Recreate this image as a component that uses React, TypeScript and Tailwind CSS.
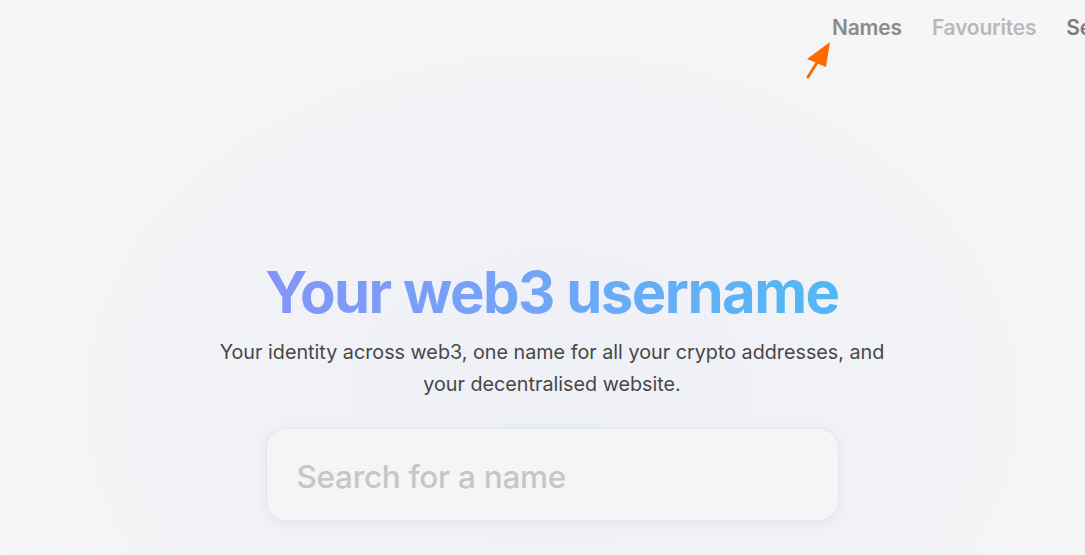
import React from "react";

const NavLinks = () => (
  <nav className="flex items-center gap-[30px] whitespace-nowrap pl-[832px] pt-[12px] text-[21px] font-semibold tracking-[-0.2px]">
    <a className="text-[#8b8b8b]">Names</a>
    <a className="text-[#b9b9b9]">Favourites</a>
    <a className="text-[#7c7c7c]">Settings</a>
  </nav>
);

const Arrow = () => (
  <svg className="absolute left-[800px] top-[36px]" width="40" height="48" viewBox="800 36 40 48">
    <line x1="808" y1="77" x2="818" y2="61" stroke="#ff6a00" strokeWidth="3" strokeLinecap="round" />
    <polygon points="830,42 807,59 826,67" fill="#ff6a00" />
  </svg>
);

export default function App() {
  return (
    <div
      className="relative h-[555px] w-full overflow-hidden bg-[radial-gradient(ellipse_620px_460px_at_552px_400px,#eef0f6_0%,#f2f3f6_60%,#f6f6f7_100%)]"
      style={{ fontFamily: "Inter, 'Noto Sans', sans-serif" }}
    >
      <div className="w-[1104px]">
        <NavLinks />
        <main className="flex flex-col items-center pt-[215px]">
          <h1 className="bg-gradient-to-r from-[#8494f8] to-[#50b8f5] bg-clip-text text-[58px] leading-[66px] font-bold tracking-[-1.5px] text-transparent">
            Your web3 username
          </h1>
          <p className="mt-[11px] w-[720px] text-center text-[19.75px] leading-[32px] text-[#474747]">
            Your identity across web3, one name for all your crypto addresses, and
            <br />
            your decentralised website.
          </p>
          <div className="mt-[28px] flex h-[93px] w-[573px] items-center rounded-[20px] border border-[#e2e5ed] bg-[#f5f5f7] px-[30px] pt-[5px] shadow-[0_2px_12px_rgba(200,205,220,0.35)]">
            <input
              placeholder="Search for a name"
              className="w-full bg-transparent text-[31.5px] font-medium tracking-[-0.3px] text-[#333] outline-none placeholder:text-[#c6c6c6]"
            />
          </div>
        </main>
      </div>
      <Arrow />
    </div>
  );
}
